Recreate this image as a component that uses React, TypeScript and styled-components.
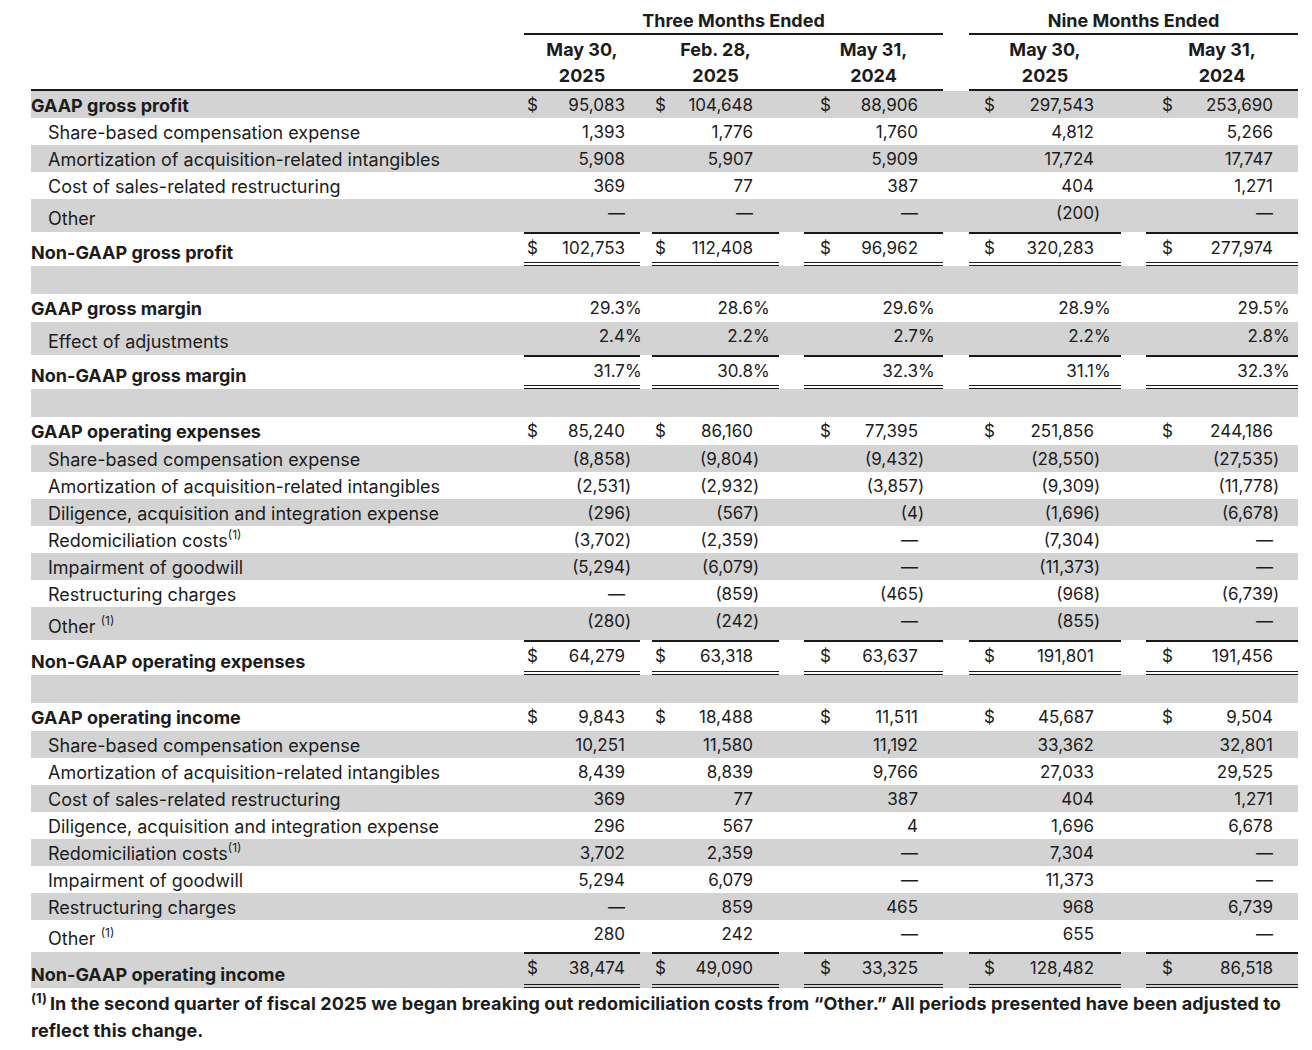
import React from "react";
import styled, { createGlobalStyle } from "styled-components";

const GlobalStyle = createGlobalStyle`
  html, body { margin: 0; padding: 0; background: #ffffff; }
  body {
    font-family: Inter, "Noto Sans", sans-serif;
    color: #1c1c1c;
    font-size: 17px;
  }
`;

const GRID = "493px 116px 12px 127px 25px 139px 26px 152px 25px 152px";
const SHADE = "#d3d3d3";
const INK = "#1a1a1a";

type Col = { pad: number; right: number };
const COLS: Col[] = [
  { pad: 3, right: 0 },
  { pad: 3, right: 11 },
  { pad: 16, right: 10 },
  { pad: 15, right: 12 },
  { pad: 16, right: 10 },
];

type RowData = {
  label?: React.ReactNode;
  bold?: boolean;
  indent?: boolean;
  dollar?: boolean;
  total?: boolean;
  values?: string[];
  h?: number;
};

const Sheet = styled.main`
  width: 1267px;
  padding: 0 14px 0 31px;
`;

const HeadRow = styled.div<{ $h: number }>`
  display: grid;
  grid-template-columns: ${GRID};
  height: ${(p) => p.$h}px;
`;

const GroupHead = styled.div<{ $span: string }>`
  grid-column: ${(p) => p.$span};
  align-self: end;
  text-align: center;
  font-size: 18px;
  font-weight: 700;
  line-height: 24px;
  border-bottom: 2px solid ${INK};
`;

const ColHead = styled.div`
  box-sizing: border-box;
  padding-top: 2px;
  text-align: center;
  font-size: 18px;
  font-weight: 700;
  line-height: 26px;
  border-bottom: 2px solid ${INK};
`;

const Spacer = styled.div<{ $rule?: boolean }>`
  box-sizing: border-box;
  border-bottom: ${(p) => (p.$rule ? `2px solid ${INK}` : "none")};
`;

const Row = styled.div<{ $h: number; $shade: boolean }>`
  display: grid;
  grid-template-columns: ${GRID};
  height: ${(p) => p.$h}px;
  background: ${(p) => (p.$shade ? SHADE : "transparent")};
`;

const Label = styled.div<{ $bold?: boolean; $indent?: boolean }>`
  align-self: end;
  padding-left: ${(p) => (p.$indent ? 17 : 0)}px;
  font-size: 18px;
  font-weight: ${(p) => (p.$bold ? 700 : 400)};
  line-height: 27px;
  white-space: nowrap;
`;

const Cell = styled.div<{ $total?: boolean; $pad: number; $right: number }>`
  box-sizing: border-box;
  display: flex;
  align-items: flex-start;
  padding: 0 ${(p) => p.$right}px 0 ${(p) => p.$pad}px;
  border-top: ${(p) => (p.$total ? `2px solid ${INK}` : "none")};
  border-bottom: ${(p) => (p.$total ? `4px double ${INK}` : "none")};
  line-height: 28px;
  white-space: nowrap;
`;

const Dollar = styled.span``;

const Amount = styled.span`
  flex: 1;
  text-align: right;
`;

const Suffix = styled.span`
  width: 15px;
  flex: none;
`;

const Sup = styled.sup`
  font-size: 12px;
  line-height: 0;
  vertical-align: 8px;
`;

const Footnote = styled.p`
  margin: 0;
  padding-top: 2px;
  font-size: 18px;
  font-weight: 700;
  letter-spacing: 0.1px;
  line-height: 27px;
  white-space: nowrap;
`;

const FootSup = styled.sup`
  font-size: 13px;
  line-height: 0;
  vertical-align: 7px;
  margin-right: 3px;
`;

const D = "—";

const ROWS: RowData[] = [
  { label: "GAAP gross profit", bold: true, dollar: true, values: ["95,083", "104,648", "88,906", "297,543", "253,690"] },
  { label: "Share-based compensation expense", indent: true, values: ["1,393", "1,776", "1,760", "4,812", "5,266"] },
  { label: "Amortization of acquisition-related intangibles", indent: true, values: ["5,908", "5,907", "5,909", "17,724", "17,747"] },
  { label: "Cost of sales-related restructuring", indent: true, values: ["369", "77", "387", "404", "1,271"] },
  { label: "Other", indent: true, h: 33, values: [D, D, D, "(200)", D] },
  { label: "Non-GAAP gross profit", bold: true, dollar: true, total: true, h: 34, values: ["102,753", "112,408", "96,962", "320,283", "277,974"] },
  { h: 28 },
  { label: "GAAP gross margin", bold: true, h: 28, values: ["29.3%", "28.6%", "29.6%", "28.9%", "29.5%"] },
  { label: "Effect of adjustments", indent: true, h: 33, values: ["2.4%", "2.2%", "2.7%", "2.2%", "2.8%"] },
  { label: "Non-GAAP gross margin", bold: true, total: true, h: 34, values: ["31.7%", "30.8%", "32.3%", "31.1%", "32.3%"] },
  { h: 28 },
  { label: "GAAP operating expenses", bold: true, dollar: true, h: 28, values: ["85,240", "86,160", "77,395", "251,856", "244,186"] },
  { label: "Share-based compensation expense", indent: true, values: ["(8,858)", "(9,804)", "(9,432)", "(28,550)", "(27,535)"] },
  { label: "Amortization of acquisition-related intangibles", indent: true, values: ["(2,531)", "(2,932)", "(3,857)", "(9,309)", "(11,778)"] },
  { label: "Diligence, acquisition and integration expense", indent: true, values: ["(296)", "(567)", "(4)", "(1,696)", "(6,678)"] },
  { label: <>Redomiciliation costs<Sup>(1)</Sup></>, indent: true, values: ["(3,702)", "(2,359)", D, "(7,304)", D] },
  { label: "Impairment of goodwill", indent: true, values: ["(5,294)", "(6,079)", D, "(11,373)", D] },
  { label: "Restructuring charges", indent: true, values: [D, "(859)", "(465)", "(968)", "(6,739)"] },
  { label: <>Other <Sup>(1)</Sup></>, indent: true, h: 33, values: ["(280)", "(242)", D, "(855)", D] },
  { label: "Non-GAAP operating expenses", bold: true, dollar: true, total: true, h: 35, values: ["64,279", "63,318", "63,637", "191,801", "191,456"] },
  { h: 28 },
  { label: "GAAP operating income", bold: true, dollar: true, h: 28, values: ["9,843", "18,488", "11,511", "45,687", "9,504"] },
  { label: "Share-based compensation expense", indent: true, values: ["10,251", "11,580", "11,192", "33,362", "32,801"] },
  { label: "Amortization of acquisition-related intangibles", indent: true, values: ["8,439", "8,839", "9,766", "27,033", "29,525"] },
  { label: "Cost of sales-related restructuring", indent: true, values: ["369", "77", "387", "404", "1,271"] },
  { label: "Diligence, acquisition and integration expense", indent: true, values: ["296", "567", "4", "1,696", "6,678"] },
  { label: <>Redomiciliation costs<Sup>(1)</Sup></>, indent: true, values: ["3,702", "2,359", D, "7,304", D] },
  { label: "Impairment of goodwill", indent: true, values: ["5,294", "6,079", D, "11,373", D] },
  { label: "Restructuring charges", indent: true, values: [D, "859", "465", "968", "6,739"] },
  { label: <>Other <Sup>(1)</Sup></>, indent: true, h: 32, values: ["280", "242", D, "655", D] },
  { label: "Non-GAAP operating income", bold: true, dollar: true, total: true, h: 36, values: ["38,474", "49,090", "33,325", "128,482", "86,518"] },
];

const HEADS: [string, string][] = [
  ["May 30,", "2025"],
  ["Feb. 28,", "2025"],
  ["May 31,", "2024"],
  ["May 30,", "2025"],
  ["May 31,", "2024"],
];

function split(v: string): [string, string] {
  if (v.startsWith("(") && v.endsWith(")")) return [v.slice(0, -1), ")"];
  if (v.endsWith("%")) return [v.slice(0, -1), "%"];
  return [v, ""];
}

function DataRow({ row, shade }: { row: RowData; shade: boolean }) {
  const h = row.h ?? 27;
  const cells: React.ReactNode[] = [];
  COLS.forEach((c, i) => {
    if (i > 0) cells.push(<Spacer key={`g${i}`} />);
    if (!row.values) {
      cells.push(<Spacer key={`c${i}`} />);
      return;
    }
    const [amt, suf] = split(row.values[i]);
    cells.push(
      <Cell key={`c${i}`} $total={row.total} $pad={c.pad} $right={c.right}>
        <Dollar>{row.dollar ? "$" : ""}</Dollar>
        <Amount>{amt}</Amount>
        <Suffix>{suf}</Suffix>
      </Cell>
    );
  });
  return (
    <Row $h={h} $shade={shade}>
      <Label $bold={row.bold} $indent={row.indent}>
        {row.label}
      </Label>
      {cells}
    </Row>
  );
}

export default function App() {
  return (
    <>
      <GlobalStyle />
      <Sheet>
        <HeadRow $h={35}>
          <Spacer />
          <GroupHead $span="2 / 7">Three Months Ended</GroupHead>
          <Spacer />
          <GroupHead $span="8 / 11">Nine Months Ended</GroupHead>
        </HeadRow>
        <HeadRow $h={56}>
          <Spacer $rule />
          {HEADS.map(([a, b], i) => (
            <React.Fragment key={i}>
              {i > 0 && <Spacer $rule={i !== 3} />}
              <ColHead>
                {a}
                <br />
                {b}
              </ColHead>
            </React.Fragment>
          ))}
        </HeadRow>
        {ROWS.map((r, i) => (
          <DataRow key={i} row={r} shade={i % 2 === 0} />
        ))}
        <Footnote>
          <FootSup>(1)</FootSup>In the second quarter of fiscal 2025 we began breaking out redomiciliation costs from
          “Other.” All periods presented have been adjusted to
          <br />
          reflect this change.
        </Footnote>
      </Sheet>
    </>
  );
}
